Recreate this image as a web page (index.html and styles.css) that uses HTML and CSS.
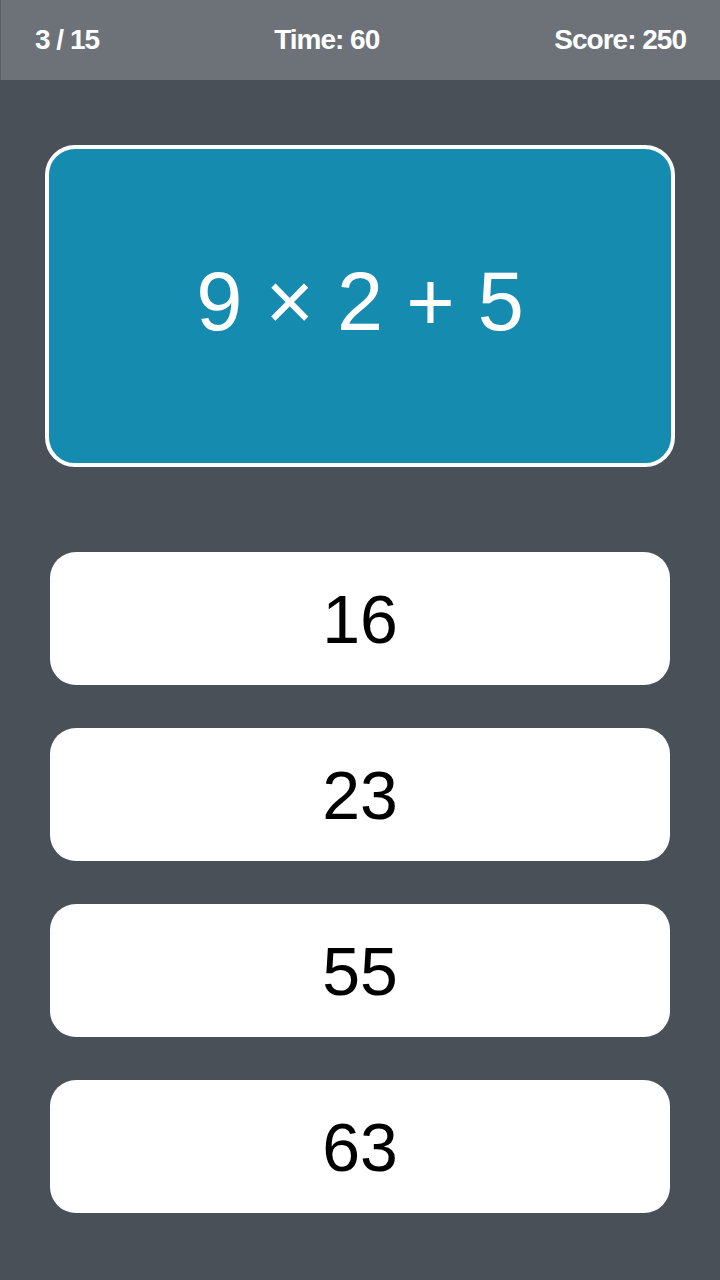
FILE: index.html
```html
<!DOCTYPE html>
<html>
<head>
<meta charset="utf-8">
<link rel="stylesheet" href="styles.css">
</head>
<body>
<div class="app">
  <header class="topbar">
    <span class="stat">3 / 15</span>
    <span class="stat">Time: 60</span>
    <span class="stat">Score: 250</span>
  </header>
  <main class="content">
    <div class="question">9 × 2 + 5</div>
    <div class="answers">
      <button class="answer">16</button>
      <button class="answer">23</button>
      <button class="answer">55</button>
      <button class="answer">63</button>
    </div>
  </main>
</div>
</body>
</html>
```
FILE: styles.css
```css
html, body {
  margin: 0;
  padding: 0;
}
body {
  background: #495057;
  font-family: "Liberation Sans", Arial, sans-serif;
  width: 720px;
  height: 1280px;
  overflow: hidden;
}
.app {
  display: flex;
  flex-direction: column;
  height: 1280px;
}
.topbar {
  height: 80px;
  box-sizing: border-box;
  background: #6c7278;
  border-left: 1px solid #585e64;
  display: flex;
  justify-content: space-between;
  align-items: center;
  padding: 0 34px 0 34px;
}
.stat {
  color: #ffffff;
  font-family: "Liberation Sans", Arial, sans-serif;
  font-weight: bold;
  font-size: 28px;
  letter-spacing: -1px;
  line-height: 1;
}
.content {
  display: flex;
  flex-direction: column;
  padding: 65px 45px 0 45px;
}
.question {
  height: 322px;
  box-sizing: border-box;
  border: 4px solid #ffffff;
  border-radius: 30px;
  background: #168bb0;
  color: #ffffff;
  font-size: 83px;
  padding-bottom: 8px;
  display: flex;
  align-items: center;
  justify-content: center;
}
.answers {
  display: flex;
  flex-direction: column;
  gap: 43px;
  margin-top: 85px;
  padding: 0 5px;
}
.answer {
  height: 133px;
  border: none;
  border-radius: 26px;
  background: #ffffff;
  color: #000000;
  font-family: "Liberation Sans", Arial, sans-serif;
  font-size: 68px;
  display: flex;
  align-items: center;
  justify-content: center;
  padding: 0;
}
```
